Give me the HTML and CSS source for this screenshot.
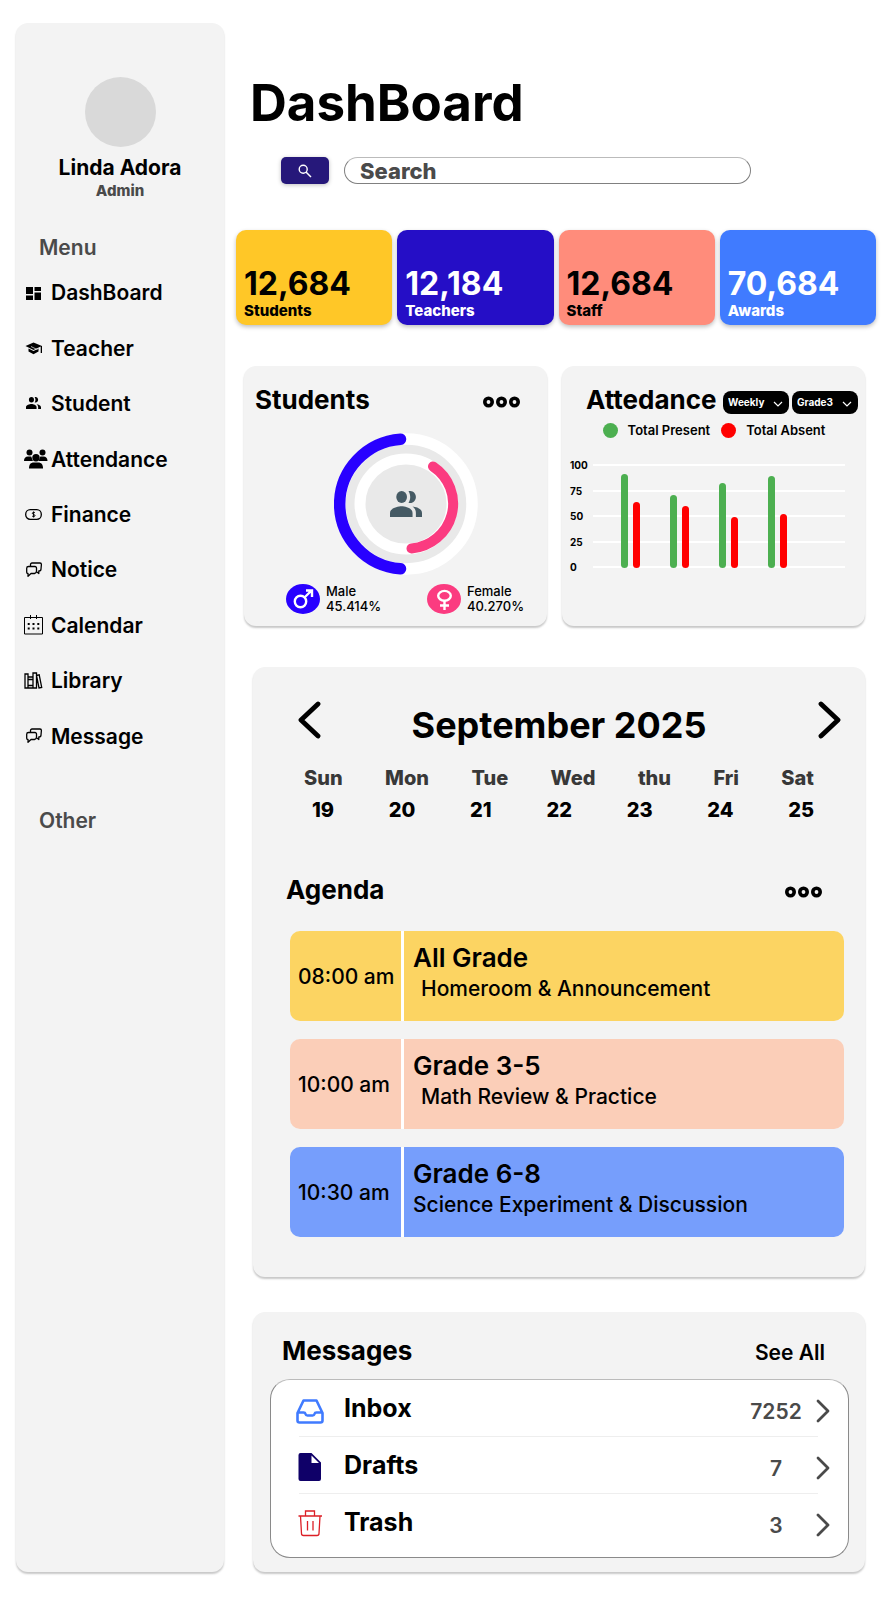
FILE: index.html
```html
<!DOCTYPE html>
<html lang="en">
<head>
<meta charset="utf-8">
<meta name="viewport" content="width=device-width, initial-scale=1">
<title>DashBoard</title>
<link rel="stylesheet" href="styles.css">
</head>
<body>
<svg class="sprite" aria-hidden="true">
  <symbol id="people" viewBox="1 4 22 16" preserveAspectRatio="none">
    <circle cx="9" cy="7.7" r="3.7"/>
    <path d="M15 11.4c2.1 0 3.8-1.7 3.8-3.7S17.100 4 15 4c-.5 0-.9.1-1.300.2.8 1 1.200 2.200 1.200 3.500s-.4 2.500-1.200 3.500c.4.1.8.2 1.300.2z"/>
    <path d="M9 13.400c-2.700 0-8 1.200-8 4.100V20h15.500v-2.500c0-2.900-4.800-4.100-7.500-4.100zM16.500 13.500c1.400.9 2.300 2.300 2.300 4V20H23v-2.500c0-2.500-3.500-3.700-6.500-4z"/>
  </symbol>
  <symbol id="chats" viewBox="0 0 24 20">
    <path d="M6.500 6V4.500a1.500 1.500 0 0 1 1.500-1.500h8a1.500 1.500 0 0 1 1.400 1.500L17 9a2 2 0 0 1-2 2h-.2v2.500L13 12M4.500 6.500H11a1.500 1.500 0 0 1 1.500 1.500v3a2.500 2.500 0 0 1-2 2.500H7L4 16.300V13.500A1.300 1.300 0 0 1 2.700 12.200V8.300A1.800 1.800 0 0 1 4.500 6.500z" fill="none" stroke="#000" stroke-width="1.300" stroke-linejoin="round"/>
  </symbol>
  <symbol id="more" viewBox="0 0 37 12">
    <g fill="none" stroke="#000" stroke-width="3.600"><circle cx="5.500" cy="6" r="3.700"/><circle cx="18.500" cy="6" r="3.700"/><circle cx="31.500" cy="6" r="3.700"/></g>
  </symbol>
  <symbol id="next" viewBox="0 0 14 24">
    <path d="M2 2l10 10L2 22" fill="none" stroke="#4a4a4a" stroke-width="2.800" stroke-linecap="round" stroke-linejoin="round"/>
  </symbol>
  <symbol id="down" viewBox="0 0 10 6">
    <path d="M1 1l4 4 4-4" fill="none" stroke="#fff" stroke-width="1.200"/>
  </symbol>
</svg>

<aside class="sidebar">
  <div class="avatar"></div>
  <p class="user-name">Linda Adora</p>
  <p class="user-role">Admin</p>
  <h2 class="nav-heading">Menu</h2>
  <nav>
    <ul class="nav-list">
      <li><a href="#"><svg class="nav-icon" viewBox="0 0 24 20"><path d="M2 4h7v7H2zM2 12.500h7V17H2zM10.500 4H17v4h-6.500zM10.500 9.500H17V17h-6.500z"/></svg>DashBoard</a></li>
      <li><a href="#"><svg class="nav-icon" viewBox="0 0 24 20"><path d="M9.500 4.500L1.500 8l8 4L16.700 8.400V15H18V8zM4.500 10.500v3l5 2.700 5-2.700v-3l-5 2.500z"/><path d="M7 8.500l4 2 2.500 1" fill="none" stroke="#f3f3f3" stroke-width=".7"/></svg>Teacher</a></li>
      <li><a href="#"><svg class="nav-icon" viewBox="0 0 24 20"><use href="#people" x="2" y="3" width="15" height="12"/></svg>Student</a></li>
      <li><a href="#"><svg class="nav-icon" viewBox="0 0 24 20"><circle cx="5.500" cy="3.500" r="3"/><circle cx="18.500" cy="3.500" r="3"/><path d="M0 12c0-3 1.500-4.500 4-4.500h2.500c.8 0 1 .4 1.200 1.200.2 1 .7 2 1.300 3.300zM23.500 12c0-3-1.500-4.500-4-4.500h-2.500c-.8 0-1 .4-1.200 1.200-.2 1-.7 2-1.300 3.300z"/><circle cx="12" cy="8.800" r="3.700"/><path d="M5 19.500c0-4 1.500-6 5-6h4c3.500 0 5 2 5 6z"/></svg>Attendance</a></li>
      <li><a href="#"><svg class="nav-icon" viewBox="0 0 24 20"><rect x="1.700" y="5.700" width="15.600" height="9.600" rx="4.500" fill="none" stroke="#000" stroke-width="1.300"/><path d="M11 8.700c-.6-.5-2.700-.5-2.700.6 0 1.200 2.700 1 2.700 2.300 0 1.100-2.100 1.100-2.900.5M9.600 7.500v6" fill="none" stroke="#000" stroke-width="1"/></svg>Finance</a></li>
      <li><a href="#"><svg class="nav-icon"><use href="#chats"/></svg>Notice</a></li>
      <li><a href="#"><svg class="nav-icon" viewBox="0 0 24 20"><path d="M.5 2.500h18V19H.5zM6.500 0v4M12.500 0v4" fill="none" stroke="#000" stroke-width="1"/><path d="M3.700 8h2v2h-2zM8.500 8h2v2h-2zM13.300 8h2v2h-2zM3.700 12.500h2v2h-2zM8.500 12.500h2v2h-2zM13.300 12.500h2v2h-2z"/></svg>Calendar</a></li>
      <li><a href="#"><svg class="nav-icon" viewBox="0 0 24 20"><path d="M1 3h3v14H1zM4 6h5v11H4zM9 2h3.500v15H9zM12.500 4.500l2.700-.6 2.500 12.500-2.700.6zM4 8.500h5M4 14.500h5" fill="none" stroke="#000" stroke-width="1.300"/></svg>Library</a></li>
      <li><a href="#"><svg class="nav-icon"><use href="#chats"/></svg>Message</a></li>
    </ul>
  </nav>
  <h2 class="nav-heading nav-heading-other">Other</h2>
</aside>

<main class="main">
  <h1 class="page-title">DashBoard</h1>
  <form class="search" role="search">
    <button class="search-button" type="button" aria-label="Run search"><svg width="14" height="14" viewBox="0 0 14 14"><circle cx="5.200" cy="5.200" r="4" fill="none" stroke="#fff" stroke-width="1.400"/><path d="M8 8l5 5" stroke="#fff" stroke-width="1.500"/></svg></button>
    <input class="search-input" type="search" placeholder="Search" aria-label="Search">
  </form>

  <section class="stats">
    <article class="stat stat-yellow"><strong>12,684</strong><span>Students</span></article>
    <article class="stat stat-indigo"><strong>12,184</strong><span>Teachers</span></article>
    <article class="stat stat-coral"><strong>12,684</strong><span>Staff</span></article>
    <article class="stat stat-blue"><strong>70,684</strong><span>Awards</span></article>
  </section>

  <div class="panels">
    <section class="panel students">
      <header class="students-head">
        <h2>Students</h2>
        <button class="more" type="button" aria-label="Student options"><svg width="37" height="12"><use href="#more"/></svg></button>
      </header>
      <svg class="donut" viewBox="0 0 144 142">
        <ellipse cx="72" cy="71" rx="66" ry="65" fill="#e9e9e9" stroke="#fff" stroke-width="11.500"/>
        <ellipse cx="72" cy="71" rx="46" ry="45" fill="#e9e9e9" stroke="#fff" stroke-width="11"/>
        <path d="M66.500 6.200A66 65 0 0 0 66.500 135.800" fill="none" stroke="#2800ff" stroke-width="11.500" stroke-linecap="round"/>
        <path d="M99 33.500A46 45 0 0 1 77.500 115.500" fill="none" stroke="#fb3b80" stroke-width="10" stroke-linecap="round"/>
        <use href="#people" x="56" y="58" width="32" height="26" fill="#455a64"/>
      </svg>
      <ul class="gender">
        <li>
          <svg width="34" height="30" viewBox="0 0 34 30"><ellipse cx="17" cy="15" rx="17" ry="15" fill="#2800ff"/><circle cx="14.500" cy="17.500" r="5.700" fill="none" stroke="#fff" stroke-width="2.400"/><path d="M18.500 13.500l7-7M20 6.500h6v6.500" fill="none" stroke="#fff" stroke-width="2.400"/></svg>
          <p>Male<br>45.414%</p>
        </li>
        <li>
          <svg width="34" height="30" viewBox="0 0 34 30"><ellipse cx="17" cy="15" rx="17" ry="15" fill="#fb3b80"/><ellipse cx="17.500" cy="11.800" rx="6.300" ry="4.900" fill="none" stroke="#fff" stroke-width="2.400"/><path d="M17.500 17v9M13 21.500h9" fill="none" stroke="#fff" stroke-width="2.400"/></svg>
          <p>Female<br>40.270%</p>
        </li>
      </ul>
    </section>

    <section class="panel attendance">
      <header class="attendance-head">
        <h2>Attedance</h2>
        <div class="filters">
          <div class="picker"><select aria-label="Period"><option>Weekly</option></select><svg width="10" height="6"><use href="#down"/></svg></div>
          <div class="picker"><select aria-label="Grade"><option>Grade3</option></select><svg width="10" height="6"><use href="#down"/></svg></div>
        </div>
      </header>
      <ul class="legend">
        <li><i class="dot present"></i>Total Present</li>
        <li><i class="dot absent"></i>Total Absent</li>
      </ul>
      <div class="chart">
        <div class="scale"><span>100</span><span>75</span><span>50</span><span>25</span><span>0</span></div>
        <div class="plot">
          <div class="lines"><i></i><i></i><i></i><i></i><i></i></div>
          <div class="bars">
            <div class="pair"><i class="present" style="height:90%"></i><i class="absent" style="height:63%"></i></div>
            <div class="pair"><i class="present" style="height:70%"></i><i class="absent" style="height:60%"></i></div>
            <div class="pair"><i class="present" style="height:82%"></i><i class="absent" style="height:49%"></i></div>
            <div class="pair"><i class="present" style="height:88%"></i><i class="absent" style="height:52%"></i></div>
          </div>
        </div>
      </div>
    </section>
  </div>

  <section class="panel calendar">
    <header class="month">
      <button type="button" aria-label="Previous month"><svg width="23" height="38" viewBox="0 0 23 38"><path d="M20 3L3 19l17 16" fill="none" stroke="#000" stroke-width="4.800" stroke-linecap="round" stroke-linejoin="round"/></svg></button>
      <h2>September 2025</h2>
      <button type="button" aria-label="Next month"><svg width="23" height="38" viewBox="0 0 23 38"><path d="M3 3l17 16L3 35" fill="none" stroke="#000" stroke-width="4.800" stroke-linecap="round" stroke-linejoin="round"/></svg></button>
    </header>
    <div class="week weekdays"><span>Sun</span><span>Mon</span><span>Tue</span><span>Wed</span><span>thu</span><span>Fri</span><span>Sat</span></div>
    <div class="week dates"><span>19</span><span>20</span><span>21</span><span>22</span><span>23</span><span>24</span><span>25</span></div>
    <header class="agenda-head">
      <h2>Agenda</h2>
      <button class="more" type="button" aria-label="Agenda options"><svg width="37" height="12"><use href="#more"/></svg></button>
    </header>
    <ul class="agenda">
      <li class="event event-yellow"><time>08:00 am</time><div><h3>All Grade</h3><p class="indented">Homeroom &amp; Announcement</p></div></li>
      <li class="event event-peach"><time>10:00 am</time><div><h3>Grade 3-5</h3><p class="indented">Math Review &amp; Practice</p></div></li>
      <li class="event event-blue"><time>10:30 am</time><div><h3>Grade 6-8</h3><p>Science Experiment &amp; Discussion</p></div></li>
    </ul>
  </section>

  <section class="panel messages">
    <header class="messages-head">
      <h2>Messages</h2>
      <a href="#">See All</a>
    </header>
    <ul class="folders">
      <li><a href="#"><svg width="28" height="30" viewBox="0 0 28 30"><path d="M7.500 4.500h13L26.500 17v7.500a2 2 0 0 1-2 2h-21a2 2 0 0 1-2-2V17zM1.500 16.500h6a2 2 0 0 1 2 1.500 2 2 0 0 0 2 1.500h5a2 2 0 0 0 2-1.500 2 2 0 0 1 2-1.500h6" fill="none" stroke="#407bff" stroke-width="2.600" stroke-linejoin="round"/></svg><b>Inbox</b><span>7252</span><svg width="14" height="24"><use href="#next"/></svg></a></li>
      <li><a href="#"><svg width="28" height="30" viewBox="0 0 28 30"><path d="M4.500 0h11L25 9.500V26a2 2 0 0 1-2 2H4.500a2 2 0 0 1-2-2V2a2 2 0 0 1 2-2z" fill="#0f0068"/><path d="M15.500 2.500v7.500H23z" fill="#fff"/></svg><b>Drafts</b><span>7</span><svg width="14" height="24"><use href="#next"/></svg></a></li>
      <li><a href="#"><svg width="28" height="30" viewBox="0 0 28 30"><path d="M2.500 6h23.500M9.500 6V1h9v5M4.500 6l1 17.500a2 2 0 0 0 2 2H21a2 2 0 0 0 2-2L24 6M11.500 11v9.500M17 11v9.500" fill="none" stroke="#dc1f26" stroke-width="1.300"/></svg><b>Trash</b><span>3</span><svg width="14" height="24"><use href="#next"/></svg></a></li>
    </ul>
  </section>
</main>
</body>
</html>
```

FILE: styles.css
```css
* { box-sizing: border-box; }

body {
  display: flex;
  gap: 12px;
  margin: 0;
  padding: 23px 9px 27px 16px;
  background: #fff;
  color: #000;
  font-family: Inter, "Liberation Sans", sans-serif;
}

h1, h2, h3, p, ul { margin: 0; padding: 0; }
ul { list-style: none; }
a { color: inherit; text-decoration: none; }
svg { display: block; flex: none; }
button { padding: 0; border: 0; background: none; cursor: pointer; }

.sprite { position: absolute; width: 0; height: 0; }

.panel,
.sidebar {
  border-radius: 12px;
  background: #f3f3f3;
  box-shadow: 0 2px 2px rgba(0, 0, 0, 0.22);
}

.panel h2 {
  font-size: 26px;
  font-weight: 700;
  line-height: 28px;
}

/* Sidebar */
.sidebar {
  flex: 0 0 208px;
  padding-top: 54px;
}

.avatar {
  width: 71px;
  height: 70px;
  margin: 0 auto 9px;
  border-radius: 50%;
  background: #d9d9d9;
}

.user-name {
  font-size: 21px;
  font-weight: 700;
  line-height: 24px;
  text-align: center;
}

.user-role {
  margin-top: 2px;
  color: #4a4a4a;
  font-size: 15px;
  font-weight: 800;
  line-height: 18px;
  text-align: center;
}

.nav-heading {
  margin: 36px 0 5px 23px;
  color: #4a4a4a;
  font-size: 21px;
  font-weight: 600;
  line-height: 24px;
}

.nav-heading-other { margin-top: 45px; }

.nav-list {
  display: grid;
  grid-auto-rows: 1fr;
  min-height: 499px;
}

.nav-list a {
  display: flex;
  align-items: center;
  gap: 3px;
  height: 100%;
  padding-left: 8px;
  font-size: 21px;
  font-weight: 600;
}

.nav-icon { width: 24px; height: 20px; }

/* Page heading and search */
.main { flex: 1; min-width: 0; padding-top: 50px; }

.page-title {
  margin-left: 14px;
  font-size: 51px;
  font-weight: 700;
  line-height: 60px;
}

.search {
  display: flex;
  gap: 15px;
  margin: 24px 125px 46px 45px;
}

.search-button {
  display: grid;
  place-items: center;
  width: 48px;
  height: 27px;
  border-radius: 5px;
  background: #26187a;
  box-shadow: 0 1px 4px rgba(0, 0, 0, 0.25);
}

.search-input {
  flex: 1;
  min-width: 0;
  height: 27px;
  padding: 0 15px;
  border: 1px solid #808080;
  border-top-color: #bbb;
  border-radius: 14px;
  background: #fff;
  font: 800 22px Inter, "Liberation Sans", sans-serif;
  appearance: none;
}

.search-input::placeholder { color: #4a4a4a; opacity: 1; }

/* Totals */
.stats {
  display: grid;
  grid-template-columns: repeat(4, 1fr);
  gap: 5px;
}

.stat {
  display: flex;
  flex-direction: column;
  gap: 2px;
  padding: 38px 8px 5px;
  border-radius: 10px;
  box-shadow: 0 2px 4px rgba(0, 0, 0, 0.25);
}

.stat strong { font-size: 32px; font-weight: 700; line-height: 32px; }
.stat span { font-size: 15px; font-weight: 800; line-height: 18px; }
.stat-yellow { background: #ffc727; }
.stat-indigo { background: #250ec6; color: #fff; }
.stat-coral { background: #ff8c7b; }
.stat-blue { background: #407bff; color: #fff; }

/* Students and attendance */
.panels {
  display: grid;
  grid-template-columns: repeat(2, minmax(0, 1fr));
  gap: 15px;
  margin: 41px 11px 41px 8px;
}

.students { padding: 20px 27px 12px 11px; }

.students-head,
.agenda-head,
.messages-head {
  display: flex;
  align-items: center;
  justify-content: space-between;
}

.more { padding-top: 4px; }

.donut {
  width: 144px;
  height: 142px;
  margin: 19px 0 9px 79px;
}

.gender {
  display: grid;
  grid-template-columns: 141px auto;
  padding-left: 31px;
}

.gender li {
  display: flex;
  align-items: center;
  gap: 6px;
  font-size: 13px;
  font-weight: 500;
  line-height: 15px;
}

.attendance { padding: 20px 7px 12px 8px; }

.attendance-head {
  display: flex;
  align-items: center;
  justify-content: space-between;
  padding-left: 16px;
}

.filters { display: flex; gap: 3px; padding-top: 4px; }

.picker { display: grid; align-items: center; }
.picker > * { grid-area: 1 / 1; }
.picker svg { justify-self: end; margin: 3px 6px 0 0; pointer-events: none; }

.picker select {
  width: 66px;
  height: 23px;
  padding: 0 5px;
  border: 0;
  border-radius: 8px;
  background: #000;
  color: #fff;
  font: 700 10px Inter, "Liberation Sans", sans-serif;
  appearance: none;
}

.legend {
  display: flex;
  justify-content: center;
  gap: 11px;
  margin-top: 8px;
  font-size: 13px;
  font-weight: 600;
  line-height: 16px;
}

.legend li { display: flex; align-items: center; gap: 10px; }
.dot { width: 15px; height: 15px; border-radius: 50%; }
.present { background: #4caf50; }
.absent { background: #f00; }

.chart {
  display: grid;
  grid-template-columns: 18px 1fr;
  gap: 5px;
  margin: 22px 13px 0 0;
}

.scale {
  display: flex;
  flex-direction: column;
  justify-content: space-between;
  height: 112px;
  font-size: 10px;
  font-weight: 700;
  line-height: 10px;
}

.plot { display: grid; padding: 4px 0; }
.plot > div { grid-area: 1 / 1; }

.lines {
  display: flex;
  flex-direction: column;
  justify-content: space-between;
}

.lines i { height: 2px; background: #fff; }

.bars { display: flex; gap: 30px; padding-left: 28px; }
.pair { display: flex; align-items: flex-end; gap: 5px; }
.pair i { width: 7px; border-radius: 4px; }

/* Calendar */
.calendar { margin: 0 11px 35px 17px; padding: 34px 0 40px; }

.month {
  display: grid;
  grid-template-columns: 1fr auto 1fr;
  align-items: start;
  padding: 0 24px;
}

.month button { justify-self: end; }
.month button:first-child { justify-self: start; margin-left: 21px; }

.calendar .month h2 {
  padding-top: 2px;
  font-size: 36px;
  font-weight: 700;
  line-height: 44px;
}

.week {
  display: flex;
  justify-content: space-between;
  font-size: 20px;
  font-weight: 800;
  line-height: 24px;
}

.weekdays { margin: 19px 51px 8px; color: #383838; }
.dates { margin: 0 51px 54px 59px; }
.agenda-head { padding: 0 43px 0 33px; }

.agenda {
  display: grid;
  gap: 18px;
  margin: 27px 21px 0 37px;
}

.event {
  display: grid;
  grid-template-columns: 111px 1fr;
  min-height: 90px;
  border-radius: 10px;
}

.event time {
  align-self: center;
  padding-left: 8px;
  font-size: 21px;
  font-weight: 500;
}

.event div {
  padding: 13px 9px;
  border-left: 3px solid #fff;
}

.event h3 { font-size: 26px; font-weight: 600; line-height: 28px; }

.event p {
  margin-top: 4px;
  font-size: 21px;
  font-weight: 500;
  line-height: 26px;
}

.event .indented { padding-left: 8px; }
.event-yellow { background: #fcd462; }
.event-peach { background: #fbceb8; }
.event-blue { background: #769efc; }

/* Messages */
.messages { margin: 0 11px 0 17px; padding: 25px 16px 14px 17px; }
.messages-head { padding: 0 24px 0 12px; }

.messages-head a {
  padding-top: 4px;
  font-size: 21px;
  font-weight: 600;
  line-height: 24px;
}

.folders {
  margin-top: 14px;
  padding: 0 30px 7px 28px;
  border: 1px solid #8a8a8a;
  border-top-color: #bbb;
  border-radius: 20px;
  background: #fff;
}

.folders li + li { border-top: 1px solid #eee; }

.folders a {
  display: flex;
  align-items: center;
  height: 56px;
  margin: 0 -12px 0 -3px;
  padding-top: 6px;
}

.folders b {
  flex: 1;
  padding: 0 0 6px 20px;
  font-size: 25px;
  font-weight: 700;
}

.folders span {
  width: 52px;
  margin-right: 14px;
  color: #4a4a4a;
  font-size: 21px;
  font-weight: 600;
  text-align: center;
}
```
